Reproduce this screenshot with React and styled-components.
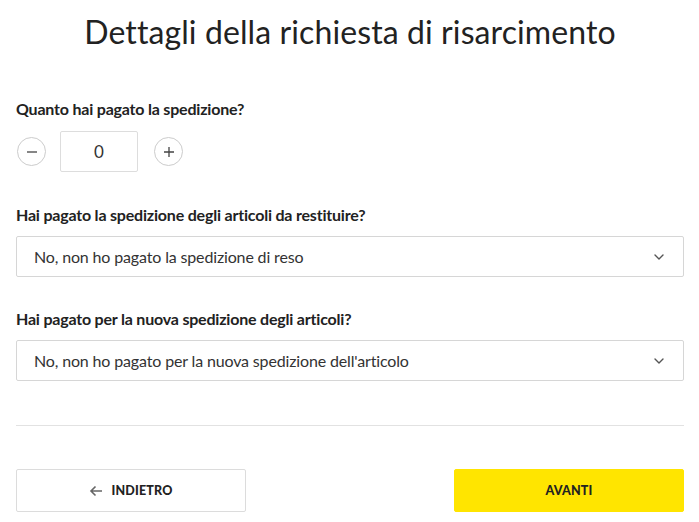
import React, { useState } from "react";
import styled, { createGlobalStyle } from "styled-components";

const GlobalStyle = createGlobalStyle`
  body {
    margin: 0;
    background: #fff;
    font-family: "Lato", "Open Sans", sans-serif;
    color: #222;
  }
`;

const Page = styled.div`
  padding: 0 15px 10px 16px;
  box-sizing: border-box;
  width: 699px;
`;

const Title = styled.h1`
  margin: 0;
  padding-top: 12px;
  height: 62px;
  text-align: center;
  font-size: 32px;
  font-weight: 400;
  letter-spacing: 0.1px;
  color: #222;
`;

const Field = styled.div`
  margin-top: ${(p) => p.top}px;
`;

const Label = styled.div`
  font-size: 16px;
  font-weight: 700;
  letter-spacing: -0.2px;
  line-height: 20px;
  margin-bottom: 11px;
`;

const Stepper = styled.div`
  display: flex;
  align-items: center;
  gap: 14px;
  margin-top: 12px;
`;

const RoundButton = styled.button`
  width: 29px;
  height: 29px;
  border-radius: 50%;
  border: 1px solid #ccc;
  background: #fff;
  color: #444;
  display: flex;
  align-items: center;
  justify-content: center;
  padding: 0;
  margin: 0 ${(p) => (p.left ? 0 : 1)}px 0 ${(p) => (p.left ? 1 : 2)}px;
`;

const Amount = styled.div`
  width: 78px;
  height: 41px;
  box-sizing: border-box;
  border: 1px solid #ddd;
  border-radius: 2px;
  display: flex;
  align-items: center;
  justify-content: center;
  font-size: 17px;
  color: #333;
`;

const Select = styled.div`
  height: 41px;
  box-sizing: border-box;
  border: 1px solid #d6d6d6;
  border-radius: 2px;
  display: flex;
  align-items: center;
  justify-content: space-between;
  padding: 0 18px 0 17px;
  font-size: 16px;
  letter-spacing: -0.15px;
  color: #333;
`;

const Divider = styled.hr`
  border: 0;
  border-top: 1px solid #e2e2e2;
  margin: 44px 0 0;
`;

const Actions = styled.div`
  display: flex;
  justify-content: space-between;
  margin-top: 43px;
`;

const ActionButton = styled.button`
  width: 230px;
  height: 43px;
  box-sizing: border-box;
  border-radius: 2px;
  border: 1px solid ${(p) => (p.primary ? "#ffe500" : "#dcdcdc")};
  background: ${(p) => (p.primary ? "#ffe500" : "#fff")};
  color: #222;
  font-family: "Lato", sans-serif;
  font-size: 12.5px;
  font-weight: 900;
  letter-spacing: 0.2px;
  display: flex;
  align-items: center;
  justify-content: center;
  gap: 8px;
`;

const Chevron = () => (
  <svg width="12" height="8" viewBox="0 0 12 8" fill="none">
    <path d="M2 2l4 4 4-4" stroke="#555" strokeWidth="1.4" strokeLinecap="round" strokeLinejoin="round" />
  </svg>
);

const MinusIcon = () => (
  <svg width="14" height="14" viewBox="0 0 14 14">
    <path d="M2 7h10" stroke="#444" strokeWidth="1.3" />
  </svg>
);

const PlusIcon = () => (
  <svg width="14" height="14" viewBox="0 0 14 14">
    <path d="M2 7h10M7 2v10" stroke="#444" strokeWidth="1.3" />
  </svg>
);

const ArrowLeft = () => (
  <svg width="14" height="12" viewBox="0 0 14 12" fill="none">
    <path d="M13 6H2M6.5 1.5L2 6l4.5 4.5" stroke="#666" strokeWidth="1.6" />
  </svg>
);

const App = () => {
  const [amount, setAmount] = useState(0);

  return (
    <Page>
      <GlobalStyle />
      <Title>Dettagli della richiesta di risarcimento</Title>

      <Field top={25}>
        <Label>Quanto hai pagato la spedizione?</Label>
        <Stepper>
          <RoundButton left onClick={() => setAmount(Math.max(0, amount - 1))}>
            <MinusIcon />
          </RoundButton>
          <Amount>{amount}</Amount>
          <RoundButton onClick={() => setAmount(amount + 1)}>
            <PlusIcon />
          </RoundButton>
        </Stepper>
      </Field>

      <Field top={33}>
        <Label>Hai pagato la spedizione degli articoli da restituire?</Label>
        <Select>
          No, non ho pagato la spedizione di reso
          <Chevron />
        </Select>
      </Field>

      <Field top={32}>
        <Label>Hai pagato per la nuova spedizione degli articoli?</Label>
        <Select>
          No, non ho pagato per la nuova spedizione dell'articolo
          <Chevron />
        </Select>
      </Field>

      <Divider />

      <Actions>
        <ActionButton>
          <ArrowLeft />
          INDIETRO
        </ActionButton>
        <ActionButton primary>AVANTI</ActionButton>
      </Actions>
    </Page>
  );
};

export default App;
